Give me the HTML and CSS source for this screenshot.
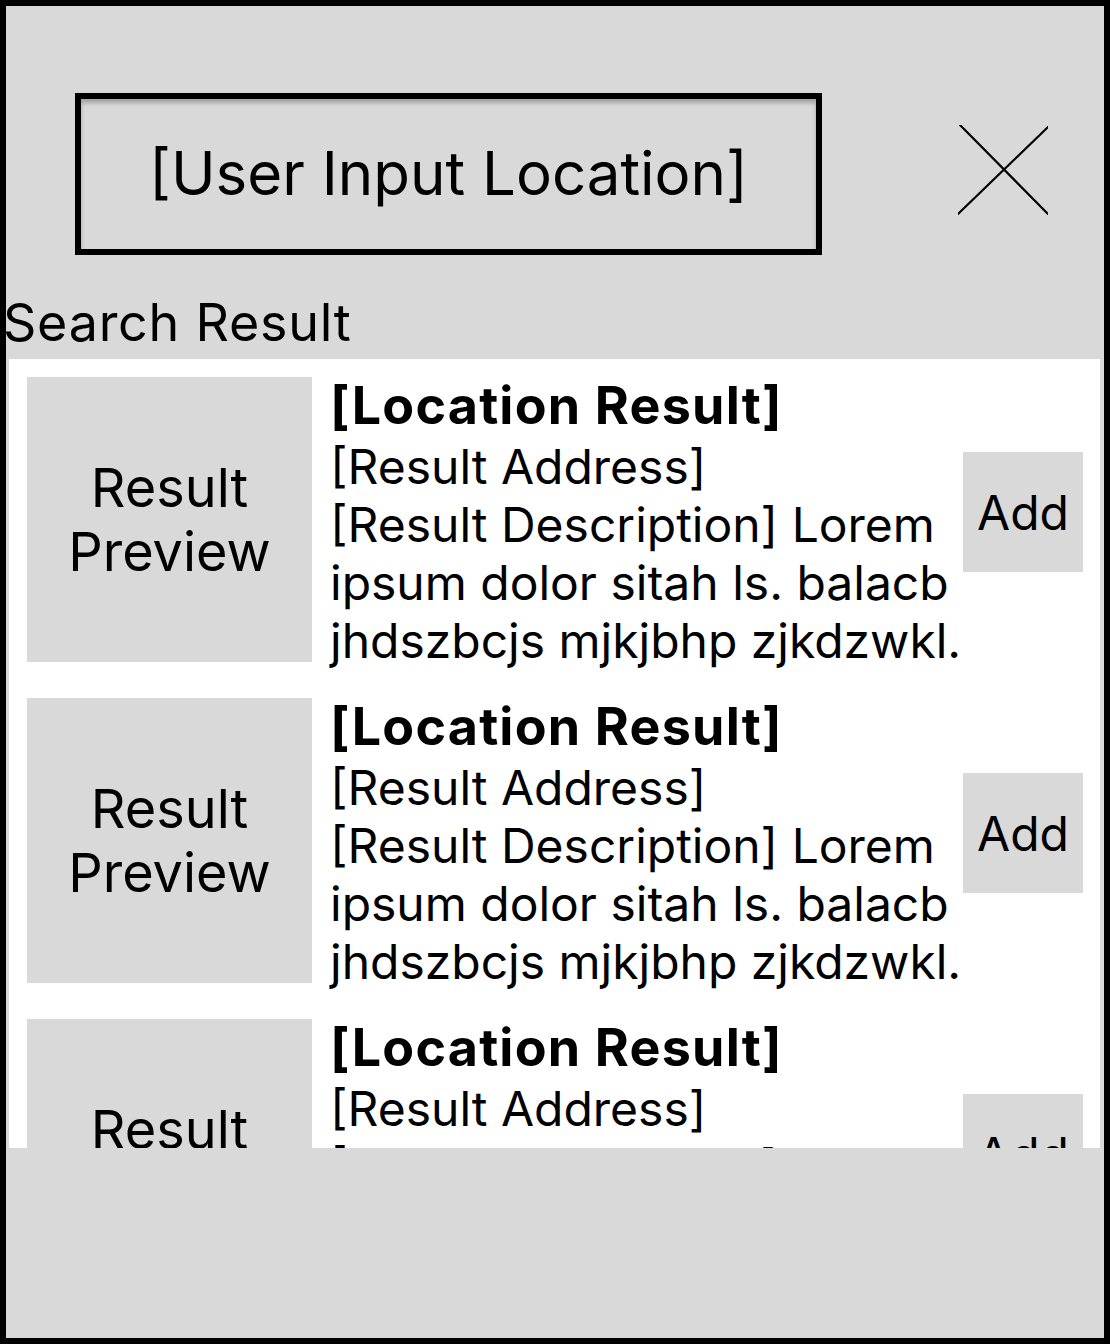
FILE: index.html
```html
<!DOCTYPE html>
<html lang="en">
<head>
<meta charset="utf-8">
<title>Search</title>
<link rel="stylesheet" href="styles.css">
</head>
<body>
<div class="frame">
  <div class="header">
    <div class="search-input">[User Input Location]</div>
    <button class="close" aria-label="Close">
      <svg width="90" height="90" viewBox="0 0 90 90"><path d="M2 0 L90 89 M90 2 L0 89" stroke="#000" stroke-width="2.2" fill="none" stroke-linecap="round"/></svg>
    </button>
  </div>
  <div class="label">Search Result</div>
  <div class="results">
    <div class="card">
      <div class="preview">Result<br>Preview</div>
      <div class="info">
        <div class="title">[Location Result]</div>
        <div class="body">[Result Address]</div>
        <div class="body">[Result Description] Lorem ipsum dolor sitah ls. balacb jhdszbcjs mjkjbhp zjkdzwkl.</div>
      </div>
      <div class="add">Add</div>
    </div>
    <div class="card">
      <div class="preview">Result<br>Preview</div>
      <div class="info">
        <div class="title">[Location Result]</div>
        <div class="body">[Result Address]</div>
        <div class="body">[Result Description] Lorem ipsum dolor sitah ls. balacb jhdszbcjs mjkjbhp zjkdzwkl.</div>
      </div>
      <div class="add">Add</div>
    </div>
    <div class="card">
      <div class="preview">Result<br>Preview</div>
      <div class="info">
        <div class="title">[Location Result]</div>
        <div class="body">[Result Address]</div>
        <div class="body">[Result Description] Lorem ipsum dolor sitah ls. balacb jhdszbcjs mjkjbhp zjkdzwkl.</div>
      </div>
      <div class="add">Add</div>
    </div>
  </div>
</div>
</body>
</html>
```
FILE: styles.css
```css
* { box-sizing: border-box; }
html, body { margin: 0; padding: 0; }
body {
  font-family: Inter, "Noto Sans", sans-serif;
  color: #000;
  background: #d9d9d9;
}
.frame {
  width: 1110px;
  height: 1344px;
  border: 6px solid #000;
  background: #d9d9d9;
  display: flex;
  flex-direction: column;
  overflow: hidden;
}
.header {
  display: flex;
  align-items: center;
  padding: 87px 0 0 69px;
}
.search-input {
  width: 747px;
  height: 162px;
  border: 6px solid #000;
  box-shadow: inset 0 4px 4px rgba(0,0,0,0.25);
  display: flex;
  align-items: center;
  justify-content: center;
  font-size: 60px;
  padding-bottom: 2px;
}
.close {
  margin-left: 136px;
  margin-top: -8px;
  width: 90px;
  height: 90px;
  padding: 0;
  border: none;
  background: none;
  display: block;
}
.close svg { display: block; }
.label {
  font-size: 52px;
  letter-spacing: 0.75px;
  margin: 38px 0 0 -3px;
  line-height: 60px;
}
.results {
  margin: 6px 4px 0 3px;
  height: 789px;
  background: #fff;
  overflow: hidden;
  padding: 18px 17px 0 18px;
  display: flex;
  flex-direction: column;
  gap: 36px;
}
.card {
  display: flex;
  align-items: flex-start;
  height: 285px;
  flex-shrink: 0;
}
.preview {
  width: 285px;
  height: 285px;
  flex-shrink: 0;
  background: #d9d9d9;
  display: flex;
  align-items: center;
  justify-content: center;
  text-align: center;
  font-size: 54px;
  line-height: 64px;
}
.info {
  flex: 1;
  margin-left: 18px;
}
.title {
  font-size: 52px;
  letter-spacing: 1.2px;
  font-weight: 700;
  line-height: 58px;
  margin-bottom: 2.5px;
}
.body {
  font-size: 48px;
  line-height: 58px;
}
.add {
  width: 120px;
  height: 120px;
  flex-shrink: 0;
  margin-top: 75px;
  background: #d9d9d9;
  display: flex;
  align-items: center;
  justify-content: center;
  font-size: 48px;
}
```
